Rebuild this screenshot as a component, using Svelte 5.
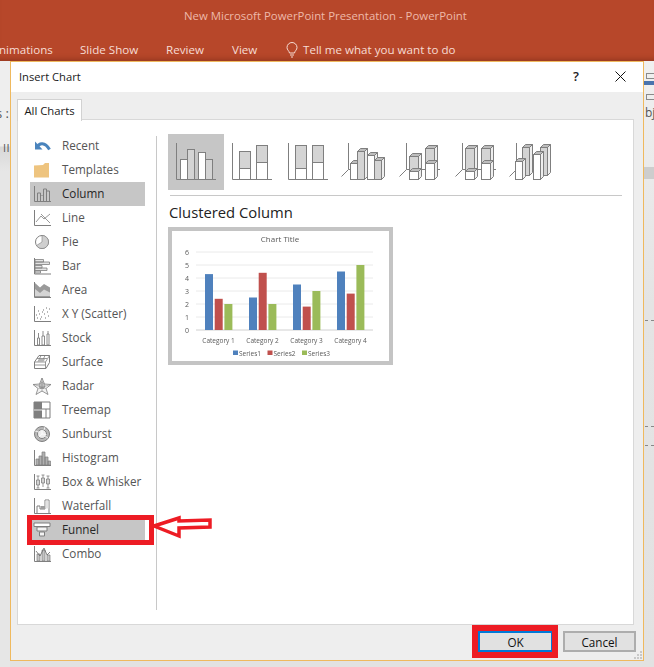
<script>
  const g = '#7f7f7f';
  const axis = `<path d="M1.5 1v15.5H18" fill="none" stroke="${g}"/>`;
  const icons = {
    recent: `<path d="M4 10.5C6 5.5 12 5 16.5 12.5" fill="none" stroke="#4a84bd" stroke-width="3"/><path d="M2 4.5v8h7.5z" fill="#4a84bd"/>`,
    templates: `<path d="M1 4.5l9-.5 2-2h4v14.5H1z" fill="#eec47f"/>`,
    column: axis + `<path d="M4.5 16V8h3v8M7.5 16V11h3v5M10.5 16V4h3v12M13.5 16V6h3v10" fill="none" stroke="${g}"/><path d="M8 11h2v5H8zM14 7h2v9h-2z" fill="#c8c8c8"/>`,
    line: axis + `<path d="M3 13l5-6 3 3 6-5M8 5l9 9" fill="none" stroke="${g}" stroke-width=".8"/>`,
    pie: `<circle cx="9" cy="9" r="6.5" fill="#fff" stroke="${g}"/><path d="M9 9V2.5A6.5 6.5 0 1 1 3.5 12.5z" fill="#cfcfcf" stroke="${g}" stroke-width=".6"/>`,
    bar: `<path d="M1.5 1v16H18" fill="none" stroke="${g}"/><path d="M2 2.5h8.5v2.5H2zM2 5h14.5v2.5H2zM2 8.5h7v2.5H2zM2 11h12v2.5H2zM2 14h5.5v2H2z" fill="#e4e4e4" stroke="${g}" stroke-width=".8"/>`,
    area: axis + `<path d="M2 2l5 4.500 4-3.500 6 3.500v9.500H2z" fill="#9a9a9a"/><path d="M2 8l5 4 4-3.500 6 3v3.500H2z" fill="#d4d4d4"/>`,
    scatter: axis + `<path d="M4 13h1M6 9h1M8 12h1M10 5h1M11 9h1M13 3h1M14 7h1M15 11h1M5 6h1M9 7h1M12 13h1M7 14h1M16 4h1M3 10h1" stroke="#a0a0a0" stroke-width="1.300"/>`,
    stock: axis + `<path d="M4.500 16V9h2v7zM9 16V7h2.500v9zM14 16V5h2v11zM5.500 4v5M10 2v5M15 2v3" fill="none" stroke="${g}" stroke-width=".9"/>`,
    surface: `<path d="M1.500 15.500V9L6 2.500h10.500v7L13 15.500z" fill="#fff" stroke="${g}"/><path d="M1.500 9h11l4-6.500M12.500 9v6.500M4 5.500h10M8 2.500L5 9M12 2.500L9 9M1.500 12h11" fill="none" stroke="${g}" stroke-width=".8"/><path d="M6 6h6l-1.500 3H5z" fill="#b5b5b5"/>`,
    radar: `<path d="M9 1l2.500 6 6.500.500-5 4 2 6-6-3.500-6 3.500 2-6-5-4 6.500-.500z" fill="#f2f2f2" stroke="${g}" stroke-width=".8"/><path d="M9 4.500l3 3.500-1 3.500H7L6 8z" fill="#bdbdbd" stroke="${g}" stroke-width=".6"/><path d="M9 1v13.500M1 7.500l12 4M17.500 7.500l-12 4" stroke="${g}" stroke-width=".5"/>`,
    treemap: `<path d="M1 1h16v16H1z" fill="#fff" stroke="${g}"/><path d="M1 1h8v16H1z" fill="${g}"/><path d="M1 9h8" stroke="#e8e8e8"/><path d="M9 8h8M13 8v9" stroke="${g}"/>`,
    sunburst: `<circle cx="9" cy="9" r="7.500" fill="#b8b8b8" stroke="${g}"/><circle cx="9" cy="9" r="4.500" fill="#eee" stroke="${g}"/><path d="M9 4.500V9l-3.500 3M9 9l4.500.500M2 6l4 1M12 2l-1 3M15 13l-3-2" fill="none" stroke="#fff" stroke-width=".8"/>`,
    histogram: axis + `<path d="M3 16v-6h3v6zM6 16V7h3v9zM9 16V3h3v13zM12 16V8h3v8zM15 16v-4h2.500v4z" fill="#b0b0b0" stroke="${g}" stroke-width=".7"/>`,
    box: axis + `<path d="M5 3v12M10 2v12M15 3v12M3.500 3h3M8.500 2h3M13.500 3h3M3.500 15h3M13.500 15h3" stroke="${g}" stroke-width=".8"/><path d="M3.500 7h3v5h-3zM8.500 5h3v5h-3zM13.500 6h3v5h-3z" fill="#d4d4d4" stroke="${g}" stroke-width=".8"/>`,
    waterfall: axis + `<path d="M4 16V9h3v3h5V3h4v13" fill="none" stroke="${g}"/><path d="M8 9h4v3H8z" fill="#9e9e9e"/><path d="M12.500 3.500h3v8h-3z" fill="#e2e2e2"/>`,
    funnel: `<path d="M1 2h16v3.500H1z" fill="#fff" stroke="${g}"/><path d="M4 6h10v4H4zM6.500 11h5v4h-5z" fill="#f4f4f4" stroke="${g}"/>`,
    combo: axis + `<path d="M4 16V9h3v7zM9 16V5h3v11zM14 16V10h3v6z" fill="#c4c4c4" stroke="${g}" stroke-width=".7"/><path d="M3 6l4 5 4-8 3 7 3-3" fill="none" stroke="#666" stroke-width=".8"/>`
  };

  const kinds = [
    ['Recent', 'recent'], ['Templates', 'templates'], ['Column', 'column'], ['Line', 'line'],
    ['Pie', 'pie'], ['Bar', 'bar'], ['Area', 'area'], ['X Y (Scatter)', 'scatter'],
    ['Stock', 'stock'], ['Surface', 'surface'], ['Radar', 'radar'], ['Treemap', 'treemap'],
    ['Sunburst', 'sunburst'], ['Histogram', 'histogram'], ['Box & Whisker', 'box'],
    ['Waterfall', 'waterfall'], ['Funnel', 'funnel'], ['Combo', 'combo']
  ];

  // flat column tiles, coords local to the 56px tile
  const flat = [
    { bars: [[12, 25, 45, 0], [19, 15, 45, 1], [30, 18, 45, 0], [37, 25, 45, 1]], w: 7 },
    { bars: [[15, 17, 34, 2], [15, 34, 45, 0], [32, 11, 28, 2], [32, 28, 45, 0]], w: 11 },
    { bars: [[15, 11, 34, 2], [15, 34, 45, 0], [32, 11, 28, 2], [32, 28, 45, 0]], w: 11 }
  ];

  // 3d tiles: [x, top, bottom, fill]
  const solid = [
    { ax: 12, boxes: [[14, 29, 45, '#fff'], [21, 17, 45, '#d4d4d4'], [31, 21, 45, '#fff'], [38, 26, 45, '#d4d4d4']], w: 7 },
    { ax: 14, boxes: [[17, 22, 37, '#d4d4d4'], [17, 37, 45, '#fff'], [33, 14, 29, '#d4d4d4'], [33, 29, 45, '#fff']], w: 9 },
    { ax: 14, boxes: [[17, 14, 37, '#d4d4d4'], [17, 37, 45, '#fff'], [33, 14, 29, '#d4d4d4'], [33, 29, 45, '#fff']], w: 9 },
    { ax: 12, boxes: [[18, 13, 41, '#d4d4d4'], [36, 13, 41, '#d4d4d4'], [11, 27, 45, '#fff'], [29, 20, 45, '#fff']], w: 7 }
  ];

  const depth = 3;
  const chart = [
    { x: 37, v: [4.3, 2.4, 2] }, { x: 81, v: [2.5, 4.4, 2] },
    { x: 125, v: [3.5, 1.8, 3] }, { x: 169, v: [4.5, 2.8, 5] }
  ];
  const colors = ['#4f81bd', '#c0504d', '#9bbb59'];
</script>

<div class="app">
  <header class="top">
    <div class="doc">New Microsoft PowerPoint Presentation - PowerPoint</div>
    <nav class="ribbon">
      <span class="anim">nimations</span>
      <span class="slide">Slide Show</span>
      <span class="review">Review</span>
      <span class="view">View</span>
      <svg class="bulb" width="12" height="16" viewBox="0 0 12 16">
        <path d="M3.500 11C3 8.500 1 8 1 5.500a5 5 0 0 1 10 0C11 8 9 8.500 8.500 11zM4 13h4M5 15h2" fill="none" stroke="#f6dcd4"/>
      </svg>
      <span>Tell me what you want to do</span>
    </nav>
  </header>

  <div class="behind">
    <div class="left-bits"><span>s :</span><span class="grip">III</span></div>
    <div class="right-bits">
      <div class="mini"></div>
      <div class="mini-bar"></div>
      <div class="mini"></div>
      <span class="bj">bj</span>
      <div class="band"></div>
      <div class="dash d1"></div>
      <div class="dash d2"></div>
      <div class="dash d3"></div>
    </div>
  </div>

  <section class="dialog">
    <div class="titlebar">
      <span class="title">Insert Chart</span>
      <span class="help">?</span>
      <svg class="close" width="11" height="11" viewBox="0 0 11 11"><path d="M.5.500l10 10M10.500.500l-10 10" stroke="#111" fill="none"/></svg>
    </div>

    <div class="tabs"><div class="tab">All Charts</div></div>

    <div class="panel">
      <ul class="kinds">
        {#each kinds as [label, key]}
          <li class:on={key === 'column' || key === 'funnel'}>
            <svg width="18" height="18" viewBox="0 0 18 18">{@html icons[key]}</svg>
            <span>{label}</span>
          </li>
        {/each}
      </ul>

      <div class="main">
        <div class="tiles">
          {#each flat as t, i}
            <div class="tile" class:sel={i === 0}>
              <svg width="56" height="56" viewBox="0 0 56 56">
                <path d="M8.500 9v36.500H48" fill="none" stroke="#7f7f7f"/>
                {#each t.bars as [x, y0, y1, tone]}
                  <rect x={x + 0.5} y={y0 + 0.5} width={t.w} height={y1 - y0} fill={tone === 1 || tone === 2 ? '#d4d4d4' : '#fff'} stroke="#7f7f7f"/>
                {/each}
              </svg>
            </div>
          {/each}
          {#each solid as t}
            <div class="tile">
              <svg width="56" height="56" viewBox="0 0 56 56">
                <path d="M{t.ax + 0.5} 9v26.500H{t.ax + 34}M{t.ax + 0.500} 35.500l-7 7" fill="none" stroke="#7f7f7f"/>
                {#each t.boxes as [x, y0, y1, fill]}
                  <path d="M{x + t.w + 0.5} {y0 + 0.5}l{depth} -{depth}v{y1 - y0}l-{depth} {depth}z" fill="#eee" stroke="#7f7f7f"/>
                  <path d="M{x + 0.5} {y0 + 0.5}l{depth} -{depth}h{t.w}l-{depth} {depth}z" fill="#bdbdbd" stroke="#7f7f7f"/>
                  <rect x={x + 0.5} y={y0 + 0.5} width={t.w} height={y1 - y0} {fill} stroke="#7f7f7f"/>
                {/each}
              </svg>
            </div>
          {/each}
        </div>
        <div class="rule"></div>
        <h2>Clustered Column</h2>

        <div class="thumb">
          <svg width="217" height="130" viewBox="0 0 217 130" font-family="'Open Sans', sans-serif" fill="#595959">
            <text x="108" y="11" font-size="8" text-anchor="middle">Chart Title</text>
            {#each [0, 1, 2, 3, 4, 5, 6] as n}
              <line x1="24" x2="201" y1={99 - n * 13} y2={99 - n * 13} stroke={n ? '#eaeaea' : '#d0d0d0'}/>
              <text x="15" y={101.500 - n * 13} font-size="7" text-anchor="middle">{n}</text>
            {/each}
            {#each chart as c, ci}
              {#each c.v as val, i}
                <rect x={c.x - 4 + i * 9.700} y={99 - val * 13} width="8" height={val * 13} fill={colors[i]}/>
              {/each}
              <text x={c.x + 9.500} y="111.500" font-size="6.500" text-anchor="middle">Category {ci + 1}</text>
            {/each}
            {#each colors as col, i}
              <rect x={61 + i * 34.500} y="119.500" width="5" height="4.500" fill={col}/>
              <text x={67 + i * 34.500} y="124.500" font-size="6.500">Series{i + 1}</text>
            {/each}
          </svg>
        </div>
      </div>
    </div>

    <div class="foot">
      <button class="ok">OK</button>
      <button>Cancel</button>
      <svg class="resize" width="10" height="10" viewBox="0 0 10 10"><path d="M7 1h2v2H7zM4 4h2v2H4zM7 4h2v2H7zM1 7h2v2H1zM4 7h2v2H4zM7 7h2v2H7z" fill="#c8c8c8"/></svg>
    </div>
  </section>

  <!-- annotations drawn on top of the dialog -->
  <div class="mark funnel-mark"></div>
  <div class="mark ok-mark"></div>
  <svg class="arrow" width="62" height="26" viewBox="0 0 62 26">
    <path d="M2 11L27 3v3l31-1v7l-31 1v8z" fill="#fff" stroke="#ed1c24" stroke-width="3.500"/>
  </svg>
</div>

<style>
  :global(body) { margin: 0; }
  .app {
    position: relative;
    width: 654px;
    height: 667px;
    overflow: hidden;
    display: flex;
    flex-direction: column;
    font-family: "Open Sans", "Noto Sans", sans-serif;
    background: #e6e6e6;
  }

  .top {
    height: 61px;
    flex: none;
    background: #b7472a;
    box-shadow: inset 0 -6px 5px -4px rgba(90, 30, 15, .35);
  }
  .doc {
    padding: 7px 0 0 184px;
    font-size: 11.400px;
    line-height: 18px;
    color: #eeb9a9;
    white-space: nowrap;
  }
  .ribbon {
    display: flex;
    align-items: center;
    margin-top: 16px;
    font-size: 11.600px;
    line-height: 18px;
    color: #f6dcd4;
    white-space: nowrap;
  }
  .anim { margin-left: -1px; width: 81px; }
  .slide { width: 86px; }
  .review { width: 66px; }
  .view { width: 54px; }
  .bulb { margin-right: 5px; }

  .behind {
    flex: 1;
    display: flex;
    justify-content: space-between;
    background: linear-gradient(#f0f0f0, #e4e4e4 40%, #e2e2e2);
    font-size: 13px;
    color: #555;
  }
  .left-bits {
    width: 10px;
    display: flex;
    flex-direction: column;
    white-space: nowrap;
    padding-top: 43px;
    overflow: hidden;
    background: linear-gradient(#eee 85px, #d8d8d8 86px, #e6e6e6 110px);
  }
  .left-bits span { margin-left: -4px; line-height: 18px; }
  .left-bits .grip { margin: 17px 0 0 3px; font-size: 11px; letter-spacing: .5px; }
  .right-bits {
    position: relative;
    width: 10px;
    overflow: hidden;
    padding-top: 12px;
    font-size: 12px;
  }
  .mini { width: 10px; height: 6px; border: 1px solid #8a8a8a; border-right: 0; margin-left: 2px; box-sizing: border-box; }
  .mini-bar { height: 4px; margin: 2px 0 9px; background: #4a74ad; }
  .bj { display: block; line-height: 14px; margin: 6px 0 0 1px; }
  .band { height: 12px; margin-top: 47px; background: #cdcdcd; }
  .dash { position: absolute; left: 1px; width: 9px; border-top: 1px dashed #888; }
  .d1 { top: 259px; }
  .d2 { top: 365px; }
  .d3 { top: 384px; }

  .dialog {
    position: absolute;
    left: 10px;
    top: 61px;
    width: 634px;
    height: 600px;
    box-sizing: border-box;
    border: 1px solid #efb95e;
    background: #eee;
    display: flex;
    flex-direction: column;
    color: #1a1a1a;
  }
  .titlebar {
    height: 30px;
    flex: none;
    background: #fff;
    display: flex;
    align-items: center;
    padding-left: 8px;
    font-size: 11.200px;
  }
  .title { flex: 1; margin-top: -2px; }
  .help { font-size: 13px; font-weight: 600; margin-right: 36px; margin-top: -2px; color: #222; }
  .close { margin-right: 17px; margin-top: -1px; }

  .tabs {
    height: 28px;
    flex: none;
    padding: 7px 0 0 6px;
    box-sizing: border-box;
  }
  .tab {
    width: 65px;
    height: 22px;
    box-sizing: border-box;
    background: #fff;
    border: 1px solid #d2d2d2;
    border-bottom: 0;
    font-size: 11.300px;
    line-height: 21px;
    text-align: center;
    position: relative;
    z-index: 1;
  }
  .panel {
    width: 617px;
    height: 506px;
    flex: none;
    margin-left: 6px;
    box-sizing: border-box;
    margin-top: -1px;
    background: #fff;
    border: 1px solid #d8d8d8;
    display: flex;
  }

  .kinds {
    list-style: none;
    margin: 0;
    padding: 14px 10px 15px 12px;
    width: 139px;
    box-sizing: border-box;
    flex: none;
    position: relative;
  }
  .kinds::after {
    content: "";
    position: absolute;
    right: 0;
    top: 16px;
    bottom: 14px;
    width: 1px;
    background: #c8c8c8;
  }
  .kinds li {
    height: 24px;
    display: flex;
    align-items: center;
    font-size: 11.700px;
    color: #555;
    width: 115px;
    padding-left: 3px;
    box-sizing: border-box;
  }
  .kinds li span { margin: -2px 0 0 11px; white-space: nowrap; }
  .kinds li svg { flex: none; }
  .kinds li.on { background: #c6c6c6; color: #262626; }

  .main { padding: 14px 0 0 11px; flex: 1; min-width: 0; }
  .tiles { display: flex; height: 56px; }
  .tile { width: 56px; height: 56px; flex: none; }
  .tile svg { display: block; }
  .tile.sel { background: #c6c6c6; }
  .rule { height: 1px; margin: 5px 11px 0 2px; background: #c8c8c8; }
  h2 {
    margin: 6px 0 0 1px;
    font-size: 14.800px;
    line-height: 20px;
    font-weight: 400;
    color: #222;
  }
  .thumb {
    margin-top: 5px;
    width: 225px;
    height: 138px;
    box-sizing: border-box;
    border: 4px solid #c4c4c4;
    background: #fff;
  }
  .thumb svg { display: block; filter: blur(.35px); }

  .foot {
    flex: 1;
    display: flex;
    align-items: flex-start;
    justify-content: flex-end;
    gap: 10px;
    padding: 6px 7px 0 0;
    position: relative;
  }
  button {
    width: 73px;
    height: 21px;
    padding: 0;
    box-sizing: border-box;
    border: 2px solid #adadad;
    background: #e1e1e1;
    font: 11.700px "Open Sans", "Noto Sans", sans-serif;
    color: #111;
  }
  button.ok { width: 75px; border-color: #0078d7; }
  .resize { position: absolute; right: 0; bottom: 0; }

  .mark {
    position: absolute;
    box-sizing: border-box;
    border: 5px solid #ed1c24;
    pointer-events: none;
  }
  .funnel-mark { left: 27px; top: 515px; width: 127px; height: 30px; }
  .ok-mark { left: 472px; top: 625px; width: 86px; height: 33px; border-width: 6px; }
  .arrow { position: absolute; left: 152px; top: 515px; }
</style>
